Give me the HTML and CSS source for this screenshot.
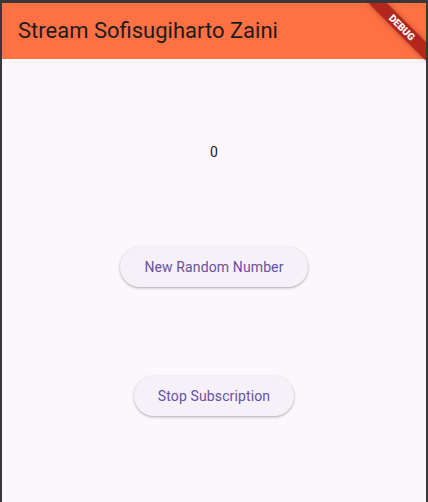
FILE: index.html
```html
<!DOCTYPE html>
<html>
<head>
<meta charset="utf-8">
<link rel="stylesheet" href="styles.css">
</head>
<body>
<div class="frame">
  <div class="app">
    <header class="appbar">
      <h1 class="title">Stream Sofisugiharto Zaini</h1>
    </header>
    <main class="content">
      <div class="number">0</div>
      <button class="btn btn-first">New Random Number</button>
      <button class="btn btn-second">Stop Subscription</button>
    </main>
    <div class="banner">DEBUG</div>
  </div>
</div>
</body>
</html>
```
FILE: styles.css
```css
html, body {
  margin: 0;
  padding: 0;
  height: 100%;
  background: #383838;
}
.frame {
  height: 100%;
  padding: 3px 2px 0 2px;
  box-sizing: border-box;
  display: flex;
}
.app {
  position: relative;
  flex: 1;
  background: #fcf7fc;
  overflow: hidden;
  display: flex;
  flex-direction: column;
  font-family: Roboto, "Liberation Sans", sans-serif;
}
.appbar {
  height: 56px;
  background: #ff7043;
  display: flex;
  align-items: center;
  padding: 0 16px;
  flex-shrink: 0;
}
.title {
  margin: 0;
  font-size: 22px;
  font-weight: 400;
  color: #1d1b20;
  line-height: 28px;
}
.content {
  flex: 1;
  display: flex;
  flex-direction: column;
  align-items: center;
  padding-top: 83px;
}
.number {
  font-size: 14px;
  line-height: 20px;
  color: #1d1b20;
  letter-spacing: 0.25px;
}
.btn {
  height: 40px;
  padding: 0 24px;
  border: none;
  border-radius: 20px;
  background: #f6f0f8;
  color: #6750a4;
  font-family: Roboto, "Liberation Sans", sans-serif;
  font-size: 14px;
  font-weight: 400;
  letter-spacing: 0.12px;
  box-shadow: 0 1px 2px rgba(0,0,0,0.22), 0 1px 3px 1px rgba(0,0,0,0.08);
}
.btn-first {
  margin-top: 85px;
}
.btn-second {
  margin-top: 89px;
}
.banner {
  position: absolute;
  left: 360px;
  top: 18px;
  width: 80px;
  height: 13px;
  transform: rotate(45deg);
  background: rgba(165, 25, 22, 0.85);
  box-shadow: 0 0 5px rgba(0,0,0,0.35);
  color: #fff;
  font-family: Roboto, "Liberation Sans", sans-serif;
  font-size: 10px;
  font-weight: 900;
  line-height: 13px;
  text-align: center;
}
```
